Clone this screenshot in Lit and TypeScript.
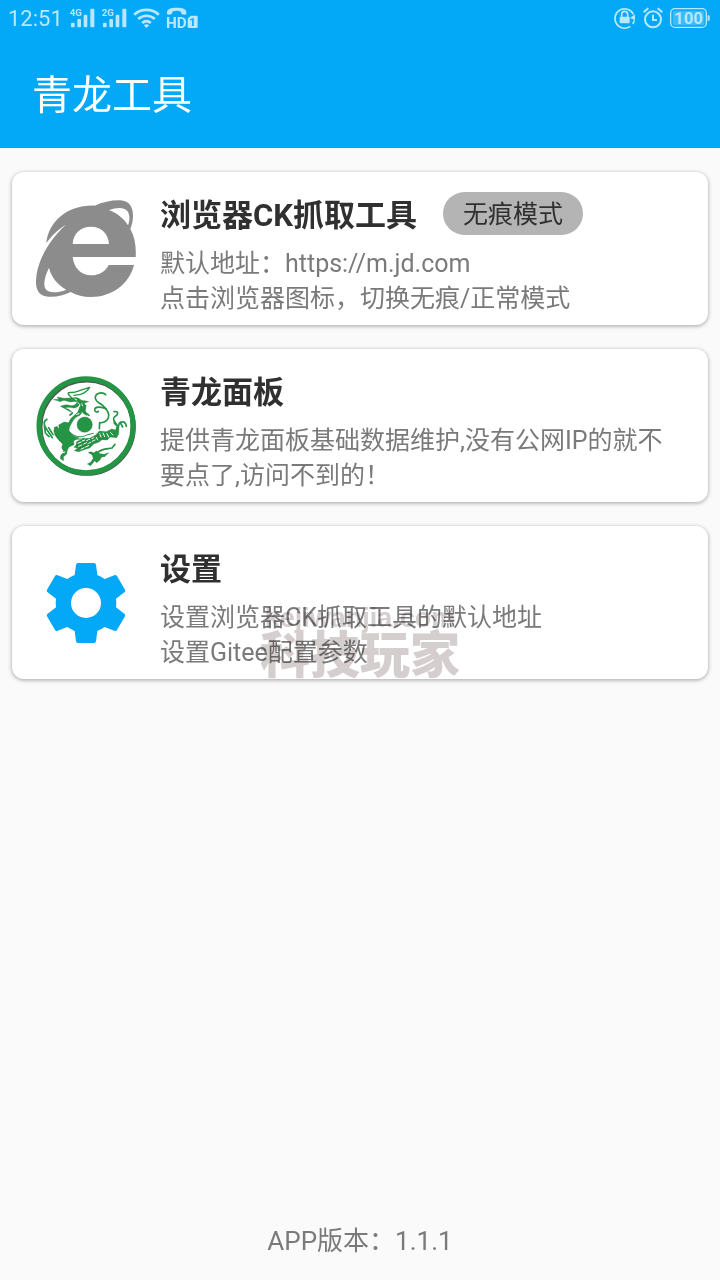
import { LitElement, html, css, svg } from "lit";
import { customElement, property, state } from "lit/decorators.js";

const FONT = css`Roboto, "Noto Sans CJK SC", sans-serif`;

const signal = (label: string) => svg`
  <svg class="icon" width="26" height="20" viewBox="0 0 78 60" role="img" aria-label=${label}>
    <text class="net" x="2" y="24">${label}</text>
    <rect x="6" y="44" width="11" height="14" rx="3" />
    <rect x="25" y="33" width="11" height="25" rx="3" />
    <rect x="44" y="20" width="11" height="38" rx="3" />
    <rect x="64" y="2" width="12" height="56" rx="3" />
  </svg>`;

const browserIcon = svg`
  <svg width="100" height="97" viewBox="108 120 300 291" aria-hidden="true">
    <path fill="#8c8c8c" fill-rule="evenodd"
      d="M139 249C146 185 202 134 284 137C310 126 335 120 361 121C386 122 399 140 399 166C399 181 396 195 391 207C404 230 409 258 407 291H218C222 324 243 346 274 346C298 346 317 334 326 315H402C388 371 338 411 272 411C250 411 230 406 212 396C190 407 166 412 145 410C118 408 107 390 108 362C110 306 143 245 197 194C172 210 155 228 139 249Z
      M218 252H327C325 220 304 200 273 200C241 200 220 221 218 252Z
      M327 151C351 159 371 175 384 196C390 180 390 164 382 153C372 141 350 141 327 151Z
      M147 323C135 347 130 370 135 384C143 401 170 400 199 389C172 374 154 351 147 323Z" />
  </svg>`;

const dragonIcon = svg`
  <svg width="100" height="100" viewBox="29 30 300 300" aria-hidden="true">
    <circle cx="181" cy="182" r="140" fill="none" stroke="#4a5a4e" stroke-width="15" />
    <circle cx="179" cy="179" r="141" fill="none" stroke="#239544" stroke-width="15" />
    <g fill="#239544" stroke="#2b6b3c" stroke-width="1" stroke-linejoin="round">
      <circle cx="175" cy="176" r="23" />
      <path d="M81 101L97 100L93 93L112 97L136 96Q152 92 160 99Q166 106 176 104L187 107L174 111L179 122L177 136L182 149L172 143L166 135L160 125L163 116L153 107Q142 105 132 108L113 103L100 107L95 104Z" />
      <path d="M102 121Q118 113 130 118Q145 122 152 109L159 117Q152 128 141 126Q126 121 116 126Q128 128 137 138L129 136Q116 128 102 121Z" />
      <path d="M160 124L169 136L161 148Q146 153 139 166Q128 183 128 195Q138 211 159 216L142 224L143 236L128 243Q121 253 121 264L111 273L112 284L102 278L103 269L112 256L106 245L109 234Q95 222 86 208Q80 195 84 184L92 181L99 190L97 177L113 168L128 170Q130 158 142 150L154 139Z" />
      <path d="M151 227Q172 215 190 217L208 207L219 195L240 197L256 189L268 192L271 180L262 173L264 162L272 174L278 182L277 204L271 215L252 213L243 222L227 221L217 229L203 233L190 246L177 250L157 257L144 254L154 247L143 244L149 237Z" />
      <path d="M186 260Q195 254 201 261L211 255L221 263L233 265L247 260L235 272L226 273L220 283L211 290L205 284L193 299L183 294L193 289L201 277L197 266Z" />
    </g>
    <g fill="none" stroke="#239544" stroke-width="5" stroke-linecap="round" stroke-linejoin="round">
      <path stroke-width="4" d="M136 95C126 86 120 79 132 79C143 81 151 77 159 74L190 64C184 74 174 81 163 85L143 88" />
      <path d="M238 86C229 77 208 80 207 94C206 107 219 110 229 118C240 128 251 143 246 156C242 166 230 171 220 170L219 188" />
      <path d="M239 128C224 121 205 121 205 132C206 139 213 139 216 136" />
      <path d="M131 147L138 141M166 123L178 119M170 134L188 148" />
      <path d="M62 160C49 166 54 178 59 187L78 215M54 177L57 201L68 212M67 185L80 206" />
      <path d="M263 137C279 134 275 148 265 152C259 156 262 166 269 176M277 180C277 166 297 161 300 181" />
      <path d="M213 260C226 247 243 249 257 246L266 235M282 170L289 183" />
      <path stroke-width="3" d="M129 197C145 214 164 216 181 207L201 202M133 209C144 221 162 221 175 217" />
    </g>
    <g fill="none" stroke="#ffffff" stroke-width="3" stroke-linecap="round">
      <path d="M155 232L164 228M168 225L175 222M181 224L190 220M196 218L203 215M157 241L166 237M172 234L180 230M185 233L194 229M198 226L206 222M164 250L173 245M178 243L187 239M210 214L214 222M220 203L224 213M230 201L235 212M242 203L247 213M253 200L260 207M104 262L116 258M146 99L151 102M166 112L169 120M151 145L158 143" />
    </g>
    <g fill="none" stroke="#35543f" stroke-width="2" stroke-dasharray="4 5">
      <path d="M151 237L181 226L209 213L222 204M160 246L184 235L211 223L233 217M90 207Q97 221 110 233M166 112L171 126L178 140" />
    </g>
  </svg>`;

const gearIcon = svg`
  <svg width="100" height="100" viewBox="0 0 300 300" aria-hidden="true">
    <path fill="#03a9f7" fill-rule="evenodd"
      d="M126 30H174Q179 30 180 35L184 66Q195 71 206 78L235 67Q240 65 243 69L267 110Q269 114 266 117L240 137Q242 150 240 163L266 183Q269 186 267 190L243 231Q240 235 235 233L206 222Q195 229 184 234L180 265Q179 270 174 270H126Q121 270 120 265L116 234Q105 229 94 222L65 233Q60 235 57 231L33 190Q31 186 34 183L60 163Q58 150 60 137L34 117Q31 114 33 110L57 69Q60 65 65 67L94 78Q105 71 116 66L120 35Q121 30 126 30Z
      M150 105A45 45 0 1 0 150 195A45 45 0 1 0 150 105Z" />
  </svg>`;

@customElement("status-bar")
class StatusBar extends LitElement {
  static styles = css`
    :host {
      display: flex;
      justify-content: space-between;
      align-items: center;
      height: 36px;
      padding: 0 10px 0 8px;
      color: #b9e7fd;
      font-family: ${FONT};
    }
    .group { display: flex; align-items: center; gap: 6px; }
    .time { font-size: 22px; line-height: 34px; padding-top: 2px; }
    .icon { display: block; fill: currentColor; overflow: visible; }
    .line { fill: none; stroke: currentColor; }
    .net { font-size: 29px; font-weight: 700; }
    .hd { font-size: 46px; font-weight: 700; }
    .level { font-size: 50px; font-weight: 700; }
    .cut { fill: #03a9f7; font-size: 34px; font-weight: 700; }
  `;

  render() {
    return html`
      <div class="group">
        <span class="time">12:51</span>
        ${signal("4G")} ${signal("2G")}
        <svg class="icon" width="27" height="20" viewBox="0 0 80 60" role="img" aria-label="Wi-Fi">
          <g class="line" stroke-width="8">
            <path d="M3 20C24 1 56 1 77 20" />
            <path d="M15 33C30 20 50 20 65 33" />
            <path d="M27 45C35 38 45 38 53 45" />
          </g>
          <path d="M32 52Q40 46 48 52L40 60Z" />
        </svg>
        <svg class="icon" width="32" height="22" viewBox="0 0 96 66" role="img" aria-label="HD 1">
          <path d="M3 20C1 5 14 2 32 2S63 5 61 20Q60 23 56 23L48 22Q45 21 45 14Q32 9 19 14Q19 21 16 22L8 23Q4 23 3 20Z" />
          <text class="hd" x="0" y="63">HD</text>
          <path d="M74 26H92Q95 26 95 29V60Q95 63 92 63H68Q65 63 65 60V35Z" />
          <text class="cut" x="70" y="57">1</text>
        </svg>
      </div>
      <div class="group">
        <svg class="icon" width="23" height="22" viewBox="0 0 69 66" role="img" aria-label="Rotation locked">
          <path class="line" stroke-width="5" d="M49 58A29 29 0 1 1 58 22M61 40A29 29 0 0 1 56 51" />
          <path d="M48 33L63 22L63 40Z" />
          <rect x="17" y="29" width="30" height="20" rx="3" />
          <path class="line" stroke-width="5" d="M23 30V22Q23 13 32 13T41 22V30" />
        </svg>
        <svg class="icon" width="21" height="22" viewBox="0 0 63 66" role="img" aria-label="Alarm">
          <circle class="line" stroke-width="6" cx="30" cy="37" r="24" />
          <path class="line" stroke-width="6" d="M30 23V39H42M2 16L16 4M44 4L58 16" />
        </svg>
        <svg class="icon" width="40" height="20" viewBox="0 0 120 60" role="img" aria-label="Battery 100">
          <rect class="line" stroke-width="4" x="2" y="2" width="107" height="56" rx="13" />
          <rect x="8" y="8" width="95" height="44" rx="6" opacity="0.3" />
          <path d="M113 22H116Q119 22 119 25V35Q119 38 116 38H113Z" />
          <text class="level" x="56" y="47" text-anchor="middle">100</text>
        </svg>
      </div>
    `;
  }
}

@customElement("tool-card")
class ToolCard extends LitElement {
  @property() heading = "";
  @property() href = "#";

  static styles = css`
    :host {
      display: flex;
      align-items: center;
      gap: 24px;
      padding: 20px 24px 8px;
      border-radius: 12px;
      background: #ffffff;
      box-shadow: 0 1px 4px rgba(0, 0, 0, 0.36);
      font-family: ${FONT};
    }
    .art { flex: none; display: flex; justify-content: center; width: 100px; padding-bottom: 12px; }
    .body { flex: 1; min-width: 0; }
    .head { display: flex; align-items: center; gap: 26px; height: 43px; margin-bottom: 11px; }
    .title { margin: 0; padding-top: 4px; font-size: 31px; line-height: 43px; font-weight: 700; }
    .link { color: #303030; text-decoration: none; }
    .text { color: #7a7a7a; font-size: 25px; line-height: 35px; padding-bottom: 1px; }
  `;

  render() {
    return html`
      <div class="art"><slot name="icon"></slot></div>
      <div class="body">
        <div class="head">
          <h2 class="title"><a class="link" href=${this.href}>${this.heading}</a></h2>
          <slot name="badge"></slot>
        </div>
        <div class="text"><slot></slot></div>
      </div>
    `;
  }
}

@customElement("app-root")
class AppRoot extends LitElement {
  @state() private incognito = true;

  static styles = css`
    :host {
      display: flex;
      flex-direction: column;
      min-height: 100vh;
      background: #fafafa;
      font-family: ${FONT};
    }
    .top { background: #03a9f7; }
    .appbar { display: flex; align-items: center; padding: 32px 32px 24px; }
    .name { margin: 0; color: #ffffff; font-size: 40px; line-height: 56px; font-weight: 400; }
    .list { flex: 1; display: flex; flex-direction: column; gap: 24px; padding: 24px 12px; }
    .toggle { display: block; padding: 2px 0 0; border: 0; background: none; cursor: pointer; }
    .pic { display: block; height: 100px; }
    .badge {
      padding: 2px 20px 0;
      border-radius: 22px;
      background: #b4b4b4;
      color: #303030;
      font-size: 25px;
      line-height: 41px;
    }
    .row { display: block; }
    .marked { position: relative; }
    .mark {
      position: absolute;
      inset: auto 0 0;
      display: flex;
      flex-direction: column;
      align-items: center;
      color: #d5cece;
      mix-blend-mode: multiply;
      pointer-events: none;
      font-weight: 700;
    }
    .site { font-family: "Liberation Sans", sans-serif; font-size: 27px; line-height: 30px; }
    .brand { font-size: 50px; line-height: 46px; font-weight: 900; }
    .footer { padding: 23px 12px 21px; color: #7a7a7a; font-size: 26px; line-height: 36px; text-align: center; }
  `;

  private toggleMode() {
    this.incognito = !this.incognito;
  }

  render() {
    return html`
      <header class="top">
        <status-bar></status-bar>
        <div class="appbar"><h1 class="name">青龙工具</h1></div>
      </header>
      <main class="list">
        <tool-card heading="浏览器CK抓取工具">
          <button class="toggle" slot="icon" aria-label="切换无痕/正常模式" @click=${this.toggleMode}>${browserIcon}</button>
          <span class="badge" slot="badge">${this.incognito ? "无痕模式" : "正常模式"}</span>
          <span class="row">默认地址：https://m.jd.com</span>
          <span class="row">点击浏览器图标，切换无痕/正常模式</span>
        </tool-card>
        <tool-card heading="青龙面板">
          <span class="pic" slot="icon">${dragonIcon}</span>
          提供青龙面板基础数据维护,没有公网IP的就不要点了,访问不到的！
        </tool-card>
        <div class="marked">
          <tool-card heading="设置">
            <span class="pic" slot="icon">${gearIcon}</span>
            <span class="row">设置浏览器CK抓取工具的默认地址</span>
            <span class="row">设置Gitee配置参数</span>
          </tool-card>
          <div class="mark" aria-hidden="true">
            <span class="site">kejiwanjia.com</span>
            <span class="brand">科技玩家</span>
          </div>
        </div>
      </main>
      <footer class="footer">APP版本：1.1.1</footer>
    `;
  }
}
